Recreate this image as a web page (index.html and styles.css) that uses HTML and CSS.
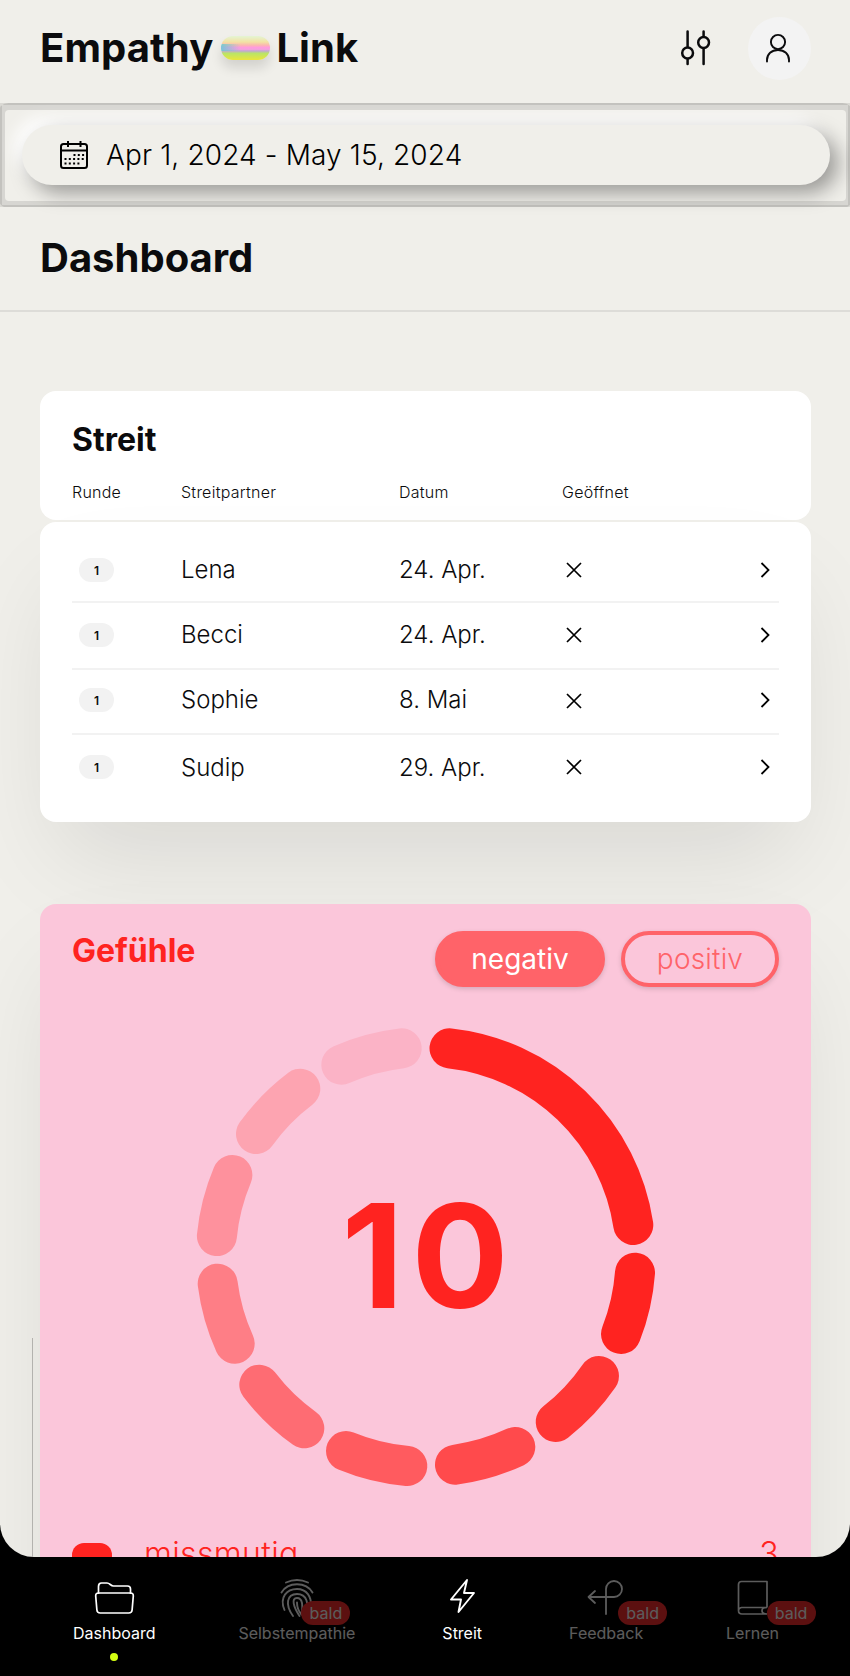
FILE: index.html
```
<!DOCTYPE html>
<html lang="de">
<head>
<meta charset="utf-8">
<title>Empathy Link – Dashboard</title>
<link rel="stylesheet" href="styles.css">
</head>
<body>
<div class="app">
  <header class="header">
    <div class="logo"><span>Empathy</span><i class="logo-pill"></i><span>Link</span></div>
    <div class="header-actions">
      <svg class="sliders" width="30" height="36" viewBox="0 0 30 36" fill="none" stroke="#0b0b0d" stroke-width="2.5" stroke-linecap="round"><path d="M6.6 1.5v15M6.600 29.5v4.5M22.6 1.5v4.5M22.6 18.5v15.5"/><circle cx="6.6" cy="23" r="5.4"/><circle cx="22.6" cy="12.5" r="5.4"/></svg>
      <div class="avatar"><svg width="24" height="29" viewBox="0 0 24 29" fill="none" stroke="#0b0b0d" stroke-width="1.9" stroke-linecap="round"><circle cx="12" cy="8" r="7.1"/><path d="M1 27.5V26C1 20 5.5 16 12 16s11 4 11 10v1.500"/></svg></div>
    </div>
  </header>
  <section class="date-strip">
    <div class="date-pill">
      <svg width="30" height="30" viewBox="0 0 30 30" fill="none" stroke="#000" stroke-width="2"><rect x="2" y="4" width="26" height="24" rx="2.5"/><path d="M2 10.500h26M9 1v6M21.500 1v6"/><path d="M14.500 15h12M5.500 19h21M5.500 23.500h17" stroke-width="2" stroke-dasharray="2 2.300"/></svg>
      <span>Apr 1, 2024 - May 15, 2024</span>
    </div>
  </section>
  <div class="title-bar"><h1>Dashboard</h1></div>
  <main class="content">
    <section class="card card-head">
      <h2>Streit</h2>
      <div class="row labels"><span>Runde</span><span>Streitpartner</span><span>Datum</span><span>Geöffnet</span></div>
    </section>
    <section class="card card-list">
      <div class="row item"><b class="badge">1</b><span>Lena</span><span>24. Apr.</span><svg class="cross" viewBox="0 0 16 16"><path d="M1 1l14 14M15 1L1 15"/></svg><svg class="chevron" viewBox="0 0 10 16"><path d="M1.500 1l7 7-7 7"/></svg></div>
      <div class="row item second"><b class="badge">1</b><span>Becci</span><span>24. Apr.</span><svg class="cross" viewBox="0 0 16 16"><path d="M1 1l14 14M15 1L1 15"/></svg><svg class="chevron" viewBox="0 0 10 16"><path d="M1.500 1l7 7-7 7"/></svg></div>
      <div class="row item third"><b class="badge">1</b><span>Sophie</span><span>8. Mai</span><svg class="cross low" viewBox="0 0 16 16"><path d="M1 1l14 14M15 1L1 15"/></svg><svg class="chevron" viewBox="0 0 10 16"><path d="M1.500 1l7 7-7 7"/></svg></div>
      <div class="row item last"><b class="badge">1</b><span>Sudip</span><span>29. Apr.</span><svg class="cross" viewBox="0 0 16 16"><path d="M1 1l14 14M15 1L1 15"/></svg><svg class="chevron" viewBox="0 0 10 16"><path d="M1.500 1l7 7-7 7"/></svg></div>
    </section>
    <section class="card feelings">
      <div class="feelings-head">
        <h2>Gefühle</h2>
        <div class="toggle"><span class="pill on">negativ</span><span class="pill off">positiv</span></div>
      </div>
      <svg class="ring" width="460" height="460" viewBox="196 1027 460 460" fill="none" stroke-width="40" stroke-linecap="round">
        <path stroke="#ff2320" d="M449.500 1048.300A209.300 209.300 0 0 1 633.300 1225"/>
        <path stroke="#ff2320" d="M635 1272.700A209.300 209.300 0 0 1 621 1334"/>
        <path stroke="#ff3634" d="M599 1376A209.300 209.300 0 0 1 555.700 1422"/>
        <path stroke="#ff4a4c" d="M515.300 1447A209.300 209.300 0 0 1 455 1464.700"/>
        <path stroke="#ff5b5f" d="M407.300 1466A209.300 209.300 0 0 1 346 1451"/>
        <path stroke="#fe6c73" d="M304.300 1428.300A209.300 209.300 0 0 1 259.300 1384.700"/>
        <path stroke="#fe7e86" d="M234.700 1343.700A209.300 209.300 0 0 1 217.700 1283.700"/>
        <path stroke="#fe919d" d="M216.900 1236A209.300 209.300 0 0 1 232.400 1175"/>
        <path stroke="#fda4b1" d="M256 1134A209.300 209.300 0 0 1 300.300 1088.700"/>
        <path stroke="#fbb3c6" d="M341.300 1064.700A209.300 209.300 0 0 1 401.700 1048.300"/>
        <text x="429" y="1308" text-anchor="middle" class="ring-number">10</text>
      </svg>
      <div class="feeling"><i class="swatch"></i><span>missmutig</span><span class="count">3</span></div>
    </section>
  </main>
  <i class="rule"></i>
</div>
<nav class="nav">
  <div class="tab n1">
    <svg width="40" height="40" viewBox="0 0 40 40" fill="none" stroke="#fff" stroke-width="1.700" stroke-linejoin="round"><path d="M4.500 16V8.500Q4.500 5 7.500 5h5.500c3 0 3.500 3 6.500 3h14q3 0 3 3v5"/><path d="M4.500 15h32q3 0 2.800 3l-1.200 14q-.3 3-3.300 3H6.200q-3 0-3.300-3L1.700 18q-.2-3 2.800-3z"/></svg>
    <span>Dashboard</span><i class="dot"></i>
  </div>
  <div class="tab soon n2">
    <svg width="40" height="40" viewBox="0 0 40 40" fill="none" stroke="#fff" stroke-width="1.900" stroke-linecap="round"><path d="M9 4.500Q20-.5 31 4.500M4.500 14.500C11 3.500 29 3.500 35.500 14.500M7.500 32C2 19 10 11 20 11s14.500 8 14 17M16 38C8 27 9.500 16 20 16s11.500 10 9.500 20M22.500 38c-6-9-8.500-18-2.500-18s5.500 8 5 14M20 24.500q0 7 4.500 12"/></svg>
    <span>Selbstempathie</span><em>bald</em>
  </div>
  <div class="tab n3">
    <svg width="40" height="40" viewBox="0 0 40 40" fill="none" stroke="#fff" stroke-width="1.900" stroke-linejoin="round"><path d="M25 2L9 21.500h10L16.500 34 32 15H22z"/></svg>
    <span>Streit</span>
  </div>
  <div class="tab soon n4">
    <svg width="40" height="40" viewBox="0 0 40 40" fill="none" stroke="#fff" stroke-width="1.800" stroke-linecap="round" stroke-linejoin="round"><path d="M20 36V11a8 8 0 1 1 8 8H3M9 13l-6.500 6L9 25"/></svg>
    <span>Feedback</span><em>bald</em>
  </div>
  <div class="tab soon n5">
    <svg width="40" height="40" viewBox="0 0 40 40" fill="none" stroke="#fff" stroke-width="1.700" stroke-linejoin="round"><path d="M34 29.500V3.500H8.500Q5.500 3.500 5.500 6.500V32.500q0 3.500 3.500 3.500H34M34 29.500H8.500q-3 .5-3 3M34 29.500q-5 0-5 3.200t5 3.300"/></svg>
    <span>Lernen</span><em>bald</em>
  </div>
</nav>
</body>
</html>
```

FILE: styles.css
```
* { box-sizing: border-box; }
html, body { margin: 0; height: 1676px; overflow: hidden; }
body { background: #000; color: #0b0b0d; font-family: Inter, "Liberation Sans", sans-serif; font-weight: 300; }
h1, h2 { margin: 0; font-weight: 700; }
svg { overflow: visible; flex: none; display: block; }

.app { position: relative; height: 1557px; overflow: hidden; background: #f0efea; border-radius: 0 0 34px 34px; }
.header { height: 103px; padding: 0 39px 7px 40px; display: flex; align-items: center; justify-content: space-between; }
.logo { display: flex; align-items: center; font-size: 40px; line-height: 48px; font-weight: 700; letter-spacing: .1px; }
.logo-pill { width: 49px; height: 24px; margin: 0 6px 0 8px; border-radius: 12px; background: linear-gradient(90deg, rgba(90,205,215,.8), rgba(120,215,225,0) 40%) 0 8px / 100% 7px no-repeat, linear-gradient(#e4f5d4 0%, #f2e2a4 25%, #fbb8b0 38%, #ff9adf 48%, #f2a2dc 56%, #c0a8d4 62%, #b9e468 72%, #eae63c 100%); box-shadow: 0 8px 12px rgba(0,0,0,.12); }
.header-actions { display: flex; align-items: center; gap: 37px; }
.avatar { width: 63px; height: 63px; border-radius: 50%; background: #f3f3f3; display: grid; place-items: center; padding-right: 3px; }

.date-strip { position: relative; height: 104px; padding: 22px 20px 22px 22px; }
.date-strip::before { content: ""; position: absolute; z-index: 2; inset: 0; border: 2px solid rgba(0,0,0,.09); }
.date-strip::after { content: ""; position: absolute; z-index: 2; inset: 7px 4px 6px 5px; border-radius: 4px; box-shadow: 0 0 0 7px rgba(0,0,0,.1); clip-path: inset(-7px -4px -6px -5px); }
.date-pill { height: 60px; border-radius: 30px; background: #f0efea; padding: 0 37px; display: flex; align-items: center; gap: 17px; font-size: 28px; letter-spacing: .14px; color: #000; box-shadow: 8px 8px 20px rgba(0,0,0,.36), -8px -8px 16px #fff; }

.title-bar { height: 105px; padding: 27px 40px; border-bottom: 2px solid #dddcd8; }
.title-bar h1 { font-size: 40px; line-height: 48px; }
.content { padding: 79px 39px 0 40px; }
.card { border-radius: 16px; background: #fff; box-shadow: 0 50px 100px -20px rgba(0,0,0,.1); }
.card h2 { font-size: 32px; line-height: 40px; }
.card-head { height: 129px; padding: 29px 32px 0; margin-bottom: 2px; box-shadow: none; }
.row { display: grid; grid-template-columns: 109px 218px 163px 1fr auto; align-items: center; }
.labels { margin-top: 21px; font-size: 16px; line-height: 22px; letter-spacing: .25px; }
.card-list { height: 300px; padding: 16px 32px 0; }
.item { height: 65px; border-bottom: 2px solid #f2f2f2; font-size: 24px; }
.second { height: 67px; padding-bottom: 2px; }
.third { padding-bottom: 4px; }
.last { border: 0; height: 64px; }
.badge { width: 35px; height: 24px; margin-left: 7px; border-radius: 12px; background: #f2f2f2; font-size: 12px; font-weight: 600; line-height: 25px; text-align: center; }
.cross { width: 16px; height: 16px; margin-left: 3.5px; fill: none; stroke: #000; stroke-width: 1.700; }
.cross.low { margin-top: 3px; }
.chevron { width: 10px; height: 16px; margin-right: 9px; fill: none; stroke: #000; stroke-width: 1.800; }

.feelings { margin-top: 82px; height: 740px; background: #fbc6da; color: #ff2320; padding: 27px 32px; }
.feelings-head { display: flex; justify-content: space-between; height: 97px; }
.toggle { display: flex; gap: 16px; }
.pill { height: 56px; border: 4px solid #ff6369; border-radius: 28px; font-size: 28px; line-height: 48px; text-align: center; box-shadow: 0 2px 5px rgba(0,0,0,.15); color: #ff6369; letter-spacing: .2px; }
.on { width: 170px; background: #ff6369; color: #fff; font-weight: 400; letter-spacing: 0; }
.off { width: 158px; background: #fbc6da; }
.ring { margin: -1px auto 0 124px; }
.ring-number { fill: #ff2320; font-size: 144px; font-weight: 700; letter-spacing: 8px; }
.feeling { display: flex; align-items: flex-start; margin-top: 47px; font-size: 32px; line-height: 40px; letter-spacing: .35px; }
.swatch { width: 40px; height: 40px; margin: 9px 32px 0 0; border-radius: 12px; background: #ff2320; }
.count { margin-left: auto; }
.rule { position: absolute; left: 32px; top: 1338px; width: 1px; height: 220px; background: #b3b2ae; }

.nav { height: 119px; display: flex; justify-content: space-between; padding: 21px 71px 0 73px; color: #fff; }
.tab { position: relative; display: flex; flex-direction: column; align-items: center; font-size: 16px; font-weight: 400; line-height: 22px; }
.tab svg { margin-bottom: 4px; }
.tab.soon { opacity: .36; }
.tab em { position: absolute; left: calc(50% + 4.5px); top: 23px; width: 49px; height: 24px; border-radius: 12px; background: #ff2d2d; font-style: normal; line-height: 24px; text-align: center; }
.n2 { margin: 0 2px 0 -2px; }
.n4 { margin: 0 -2px 0 2px; }
.n4 em { left: calc(50% + 12px); }
.n5 em { left: calc(50% + 14px); }
.dot { width: 8px; height: 8px; margin-top: 9px; border-radius: 50%; background: #d4ff13; }
```
